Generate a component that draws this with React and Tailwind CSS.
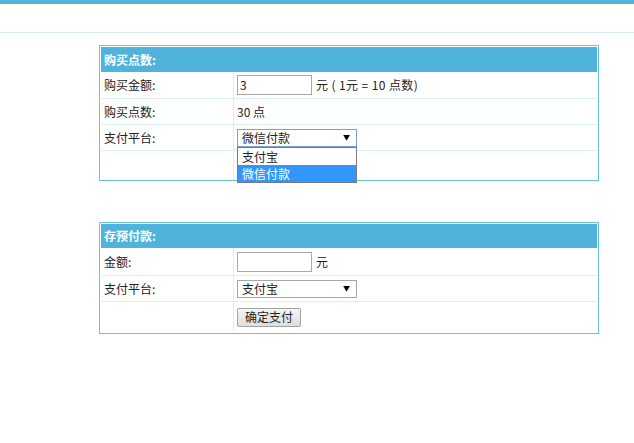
import React from "react";

const font = { fontFamily: '"Noto Sans CJK SC", "Liberation Sans", sans-serif' };

function FakeSelect({ value, focused }) {
  return (
    <div
      className={
        "relative w-[120px] h-[18px] bg-white border flex items-center pl-[4px] text-[12px] leading-none " +
        (focused ? "border-[#7a9ed8]" : "border-[#a6a6a6]")
      }
    >
      <span>{value}</span>
      <span className="absolute right-[6px] top-[4px] text-[7px] text-black">▼</span>
    </div>
  );
}

function Row({ label, children, h, last }) {
  return (
    <div className={"flex " + h + (last ? "" : " border-b border-[#dbeef4]")}>
      <div className="w-[133px] shrink-0 border-r border-[#dbeef4] flex items-center pl-[3px]">{label}</div>
      <div className="flex-1 flex items-center pl-[3px] relative">{children}</div>
    </div>
  );
}

function Panel({ title, headH, children }) {
  return (
    <section className="w-[500px] border border-[#6cc3d9] p-[1px]">
      <div className={"bg-[#4fb3dc] text-white font-bold flex items-center pl-[3px] " + headH}>{title}</div>
      {children}
    </section>
  );
}

export default function App() {
  return (
    <div className="w-[634px] h-[443px] bg-white text-[12px] text-[#222]" style={font}>
      <div className="h-[4px] bg-[#4fb3dc]" />
      <div className="h-[29px] bg-gradient-to-b from-[#fffef6] via-white to-white border-b border-[#d5ecf4]" />

      <div className="pl-[99px] pt-[12px]">
        <Panel title="购买点数:" headH="h-[25px]">
          <Row label="购买金额:" h="h-[27px]">
            <div className="w-[75px] h-[20px] border border-[#a9a9a9] flex items-center pl-[2px]">3</div>
            <span className="ml-[4px] tracking-[0.4px]">元 ( 1元 = 10 点数)</span>
          </Row>
          <Row label="购买点数:" h="h-[26px]">
            <span>30 点</span>
          </Row>
          <Row label="支付平台:" h="h-[26px]">
            <FakeSelect value="微信付款" focused />
            <ul className="absolute left-[3px] top-[22px] w-[120px] bg-white border border-[#7a7a7a] z-10">
              <li className="h-[17px] flex items-center pl-[4px]">支付宝</li>
              <li className="h-[17px] flex items-center pl-[4px] bg-[#3297fd] text-white">微信付款</li>
            </ul>
          </Row>
          <Row label="" h="h-[28px]" last />
        </Panel>
      </div>

      <div className="pl-[99px] pt-[41px]">
        <Panel title="存预付款:" headH="h-[24px]">
          <Row label="金额:" h="h-[28px]">
            <div className="w-[75px] h-[20px] border border-[#a9a9a9]" />
            <span className="ml-[4px]">元</span>
          </Row>
          <Row label="支付平台:" h="h-[26px]">
            <FakeSelect value="支付宝" />
          </Row>
          <Row label="" h="h-[30px]" last>
            <button className="w-[64px] h-[19px] border border-[#a3a3a3] rounded-[2px] bg-gradient-to-b from-[#f4f4f4] to-[#dedede] text-[12px] leading-none flex items-center justify-center">
              确定支付
            </button>
          </Row>
        </Panel>
      </div>
    </div>
  );
}
